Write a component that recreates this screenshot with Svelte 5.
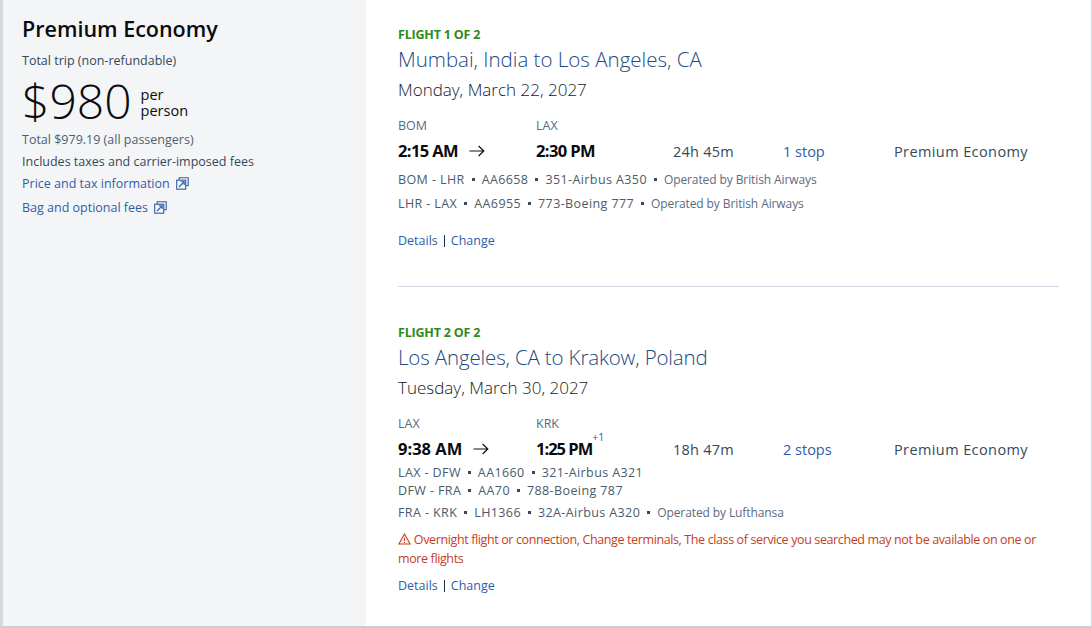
<script>
  const flights = [
    {
      label: 'FLIGHT 1 OF 2',
      route: 'Mumbai, India to Los Angeles, CA',
      date: 'Monday, March 22, 2027',
      from: 'BOM', to: 'LAX',
      dep: '2:15 AM', arr: '2:30 PM',
      dur: '24h 45m', stops: '1 stop',
      legs: [
        { parts: ['BOM - LHR', 'AA6658', '351-Airbus A350'], op: 'Operated by British Airways', cls: 'gap' },
        { parts: ['LHR - LAX', 'AA6955', '773-Boeing 777'], op: 'Operated by British Airways', cls: 'gap' }
      ]
    },
    {
      label: 'FLIGHT 2 OF 2',
      route: 'Los Angeles, CA to Krakow, Poland',
      date: 'Tuesday, March 30, 2027',
      from: 'LAX', to: 'KRK',
      dep: '9:38 AM', arr: '1:25 PM', plus: '+1',
      dur: '18h 47m', stops: '2 stops',
      legs: [
        { parts: ['LAX - DFW', 'AA1660', '321-Airbus A321'], cls: 'tight' },
        { parts: ['DFW - FRA', 'AA70', '788-Boeing 787'], cls: 'tight' },
        { parts: ['FRA - KRK', 'LH1366', '32A-Airbus A320'], op: 'Operated by Lufthansa', cls: 'gap' }
      ],
      warn: 'Overnight flight or connection, Change terminals, The class of service you searched may not be available on one or more flights'
    }
  ];
</script>

{#snippet extIcon()}
  <svg class="ext" viewBox="0 0 13 13" width="13" height="13" fill="none" stroke="currentColor" stroke-width="1.1">
    <path d="M3.2 3V.8h9v8h-2.4" />
    <rect x=".7" y="3.2" width="9" height="9" />
    <path d="M3 10 8 5M4.8 4.8h3.4v3.3" />
  </svg>
{/snippet}

<div class="card">
  <aside class="side">
    <h2>Premium Economy</h2>
    <p class="trip">Total trip (non-refundable)</p>
    <div class="price">
      <span class="amount">$980</span>
      <span class="per">per<br />person</span>
    </div>
    <p class="total">Total $979.19 (all passengers)</p>
    <p class="incl">Includes taxes and carrier-imposed fees</p>
    <a class="ilink first">Price and tax information {@render extIcon()}</a>
    <a class="ilink">Bag and optional fees {@render extIcon()}</a>
  </aside>

  <main class="main">
    {#each flights as f, i}
      <section class="flight" class:second={i === 1}>
        <div class="label">{f.label}</div>
        <h3>{f.route}</h3>
        <div class="date">{f.date}</div>

        <div class="codes">
          <span>{f.from}</span>
          <span>{f.to}</span>
        </div>
        <div class="times">
          <div class="dep">
            <b>{f.dep}</b>
            <svg class="arrow" viewBox="0 0 16 12" width="16" height="12" fill="none" stroke="#111" stroke-width="1.2"><path d="M.5 6h14.3M9.6 1l5.2 5-5.2 5" /></svg>
          </div>
          <div class="arr">
            <b>{f.arr}</b>{#if f.plus}<sup>{f.plus}</sup>{/if}
          </div>
          <div class="dur">{f.dur}</div>
          <a class="stops">{f.stops}</a>
          <div class="cabin">Premium Economy</div>
        </div>

        <div class="legs">
          {#each f.legs as leg}
            <div class="leg {leg.cls}">
              {#each leg.parts as p, j}
                {#if j > 0}<i class="dot"></i>{/if}<span>{p}</span>
              {/each}
              {#if leg.op}<i class="dot"></i><span class="op">{leg.op}</span>{/if}
            </div>
          {/each}
        </div>

        {#if f.warn}
          <p class="warn">
            <svg viewBox="0 0 13 12" width="13" height="12" fill="none" stroke="#c4401d" stroke-width="1.1"><path d="M6.5 1 .9 11h11.2zM6.5 4.4v3.6M6.5 8.9v1" /></svg>
            {f.warn}
          </p>
        {/if}

        <div class="actions"><a>Details</a><span class="bar"></span><a>Change</a></div>
      </section>
      {#if i === 0}<hr />{/if}
    {/each}
  </main>
</div>

<style>
  :global(body) {
    margin: 0;
    background: #fff;
  }
  .card {
    width: 1088px;
    height: 626px;
    display: flex;
    border-left: 3px solid #d5d9de;
    border-right: 1px solid #d5d9de;
    border-bottom: 2px solid #c9ced4;
    font-family: "Open Sans", "Noto Sans", sans-serif;
    color: #36495a;
    background: #fff;
  }
  p, h2, h3 {
    margin: 0;
    font-weight: 400;
  }
  a {
    color: #2f5da8;
  }

  .side {
    width: 363px;
    flex: none;
    box-sizing: border-box;
    background: #f4f5f7;
    padding: 14px 0 0 19px;
    display: flex;
    flex-direction: column;
    align-items: flex-start;
    font-size: 12.5px;
  }
  h2 {
    font-size: 21.5px;
    line-height: 30px;
    font-weight: 600;
    color: #0b0b0f;
  }
  .trip {
    margin-top: 8px;
    line-height: 17px;
  }
  .price {
    display: flex;
    align-items: center;
    margin-top: 9px;
    height: 46px;
    color: #0b0b0f;
  }
  .amount {
    font-size: 48px;
    font-weight: 300;
    line-height: 46px;
  }
  .per {
    font-size: 14.5px;
    line-height: 16px;
    margin-left: 9px;
    position: relative;
    top: 2px;
  }
  .total {
    margin-top: 7px;
    line-height: 17px;
    color: #4f5f6e;
  }
  .incl {
    margin-top: 5px;
    line-height: 17px;
  }
  .ilink {
    display: flex;
    align-items: center;
    gap: 6px;
    line-height: 17px;
    margin-top: 7px;
  }
  .ilink.first {
    margin-top: 5px;
  }
  .ext {
    flex: none;
  }

  .main {
    flex: 1;
    padding: 0 32px 0 32px;
    min-width: 0;
  }
  .flight {
    padding-top: 27px;
  }
  .flight.second {
    padding-top: 38px;
  }
  .label {
    font-size: 12.5px;
    line-height: 16px;
    font-weight: 700;
    letter-spacing: -0.2px;
    color: #2e8b1d;
  }
  h3 {
    font-size: 20.5px;
    line-height: 28px;
    font-weight: 300;
    color: #20497f;
    margin-top: 2px;
  }
  .second h3 {
    letter-spacing: -0.15px;
  }
  .date {
    font-size: 17px;
    line-height: 24px;
    font-weight: 300;
    color: #14181f;
    margin-top: 5px;
  }
  .codes {
    display: grid;
    grid-template-columns: 138px auto;
    justify-content: start;
    font-size: 12.5px;
    line-height: 17px;
    margin-top: 15px;
    color: #5a6a7e;
  }
  .times {
    display: grid;
    grid-template-columns: 138px 137px 110px 111px auto;
    align-items: baseline;
    margin-top: 5px;
    height: 24px;
    line-height: 24px;
  }
  .times b {
    font-size: 16.5px;
    font-weight: 700;
    color: #0a0a0f;
    letter-spacing: -0.6px;
  }
  .second .dep b {
    letter-spacing: 0;
  }
  .second .arr b {
    letter-spacing: -1px;
  }
  .dep {
    display: flex;
    align-items: center;
    gap: 11px;
  }
  .arrow {
    flex: none;
  }
  .arr {
    position: relative;
  }
  sup {
    position: absolute;
    top: -6px;
    font-size: 10.5px;
    line-height: 12px;
    color: #2f5da8;
  }
  .dur, .stops, .cabin {
    font-size: 14.5px;
    font-weight: 400;
  }
  .dur {
    letter-spacing: 0.25px;
    color: #36495a;
  }
  .cabin {
    letter-spacing: 0.4px;
  }
  .legs {
    margin-top: 4px;
    font-size: 12.5px;
    color: #4a5b6b;
    letter-spacing: 0.4px;
  }
  .second .legs {
    margin-top: 2px;
  }
  .leg {
    display: flex;
    align-items: center;
    white-space: nowrap;
  }
  .leg.gap {
    height: 24px;
  }
  .leg.tight {
    height: 18px;
  }
  .second .leg:last-child {
    height: 26px;
  }
  .dot {
    width: 3px;
    height: 3px;
    background: #36495a;
    margin: 0 7px 0 7px;
    flex: none;
  }
  .op {
    font-size: 12px;
    letter-spacing: -0.1px;
    color: #5c6b80;
  }
  .warn {
    font-size: 12.5px;
    letter-spacing: -0.38px;
    line-height: 19px;
    color: #c4401d;
    margin-top: 5px;
  }
  .warn svg {
    vertical-align: -1px;
  }
  .actions {
    display: flex;
    align-items: center;
    font-size: 12.5px;
    line-height: 17px;
    margin-top: 17px;
  }
  .second .actions {
    margin-top: 9px;
  }
  .bar {
    width: 1px;
    height: 12px;
    background: #1d2d44;
    margin: 0 6px 0 6px;
  }
  hr {
    border: 0;
    border-top: 1px solid #cfd8e3;
    margin: 37px 0 0;
    width: 661px;
  }
</style>
